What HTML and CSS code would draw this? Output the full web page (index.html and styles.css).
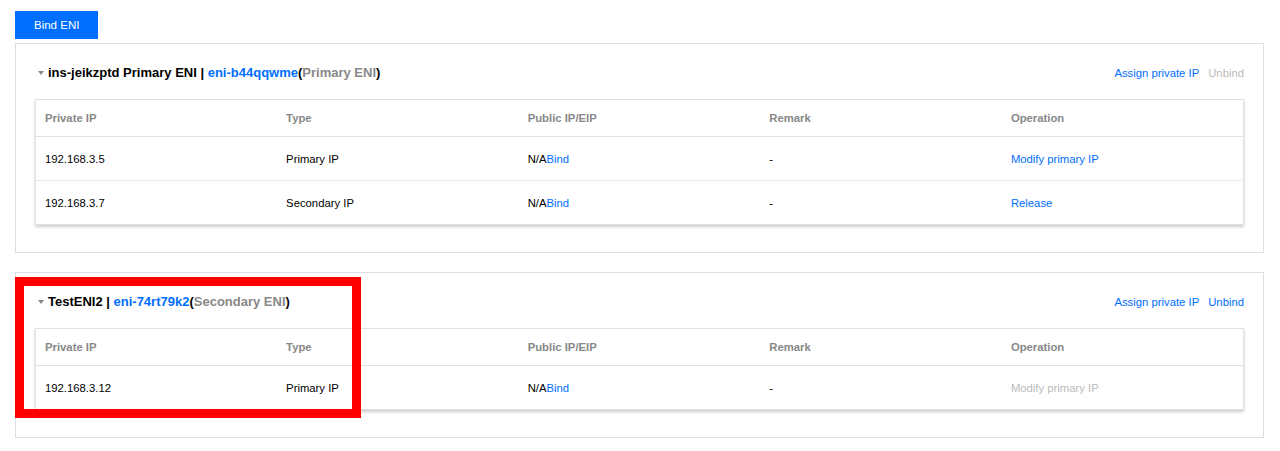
FILE: index.html
```html
<!DOCTYPE html>
<html lang="en">

<head>
    <meta charset="UTF-8">
    <title>ENI</title>
    <link rel="stylesheet" href="styles.css">
</head>

<body>
    <div class="page">
        <button class="btn-primary">Bind ENI</button>

        <div class="eni-panel">
            <div class="eni-head">
                <div class="eni-title"><span class="caret"></span>ins-jeikzptd Primary ENI | <a class="link">eni-b44qqwme</a>(<span class="muted">Primary ENI</span>)</div>
                <div class="eni-actions">
                    <a class="link">Assign private IP</a>
                    <a class="link disabled">Unbind</a>
                </div>
            </div>
            <table class="ip-table">
                <thead>
                    <tr>
                        <th>Private IP</th>
                        <th>Type</th>
                        <th>Public IP/EIP</th>
                        <th>Remark</th>
                        <th>Operation</th>
                    </tr>
                </thead>
                <tbody>
                    <tr>
                        <td>192.168.3.5</td>
                        <td>Primary IP</td>
                        <td>N/A<a class="link">Bind</a></td>
                        <td>-</td>
                        <td><a class="link">Modify primary IP</a></td>
                    </tr>
                    <tr>
                        <td>192.168.3.7</td>
                        <td>Secondary IP</td>
                        <td>N/A<a class="link">Bind</a></td>
                        <td>-</td>
                        <td><a class="link">Release</a></td>
                    </tr>
                </tbody>
            </table>
        </div>

        <div class="eni-panel">
            <div class="eni-head">
                <div class="eni-title"><span class="caret"></span>TestENI2 | <a class="link">eni-74rt79k2</a>(<span class="muted">Secondary ENI</span>)</div>
                <div class="eni-actions">
                    <a class="link">Assign private IP</a>
                    <a class="link">Unbind</a>
                </div>
            </div>
            <table class="ip-table">
                <thead>
                    <tr>
                        <th>Private IP</th>
                        <th>Type</th>
                        <th>Public IP/EIP</th>
                        <th>Remark</th>
                        <th>Operation</th>
                    </tr>
                </thead>
                <tbody>
                    <tr>
                        <td>192.168.3.12</td>
                        <td>Primary IP</td>
                        <td>N/A<a class="link">Bind</a></td>
                        <td>-</td>
                        <td><a class="link disabled">Modify primary IP</a></td>
                    </tr>
                </tbody>
            </table>
            <div class="highlight"></div>
        </div>
    </div>
</body>

</html>
```

FILE: styles.css
```css
body {
    margin: 0;
    font-family: "Liberation Sans", Arial, sans-serif;
    font-size: 11.3px;
    color: #000;
    background-color: #fff;
}

.page {
    padding: 11px 16px 0 15px;
}

.btn-primary {
    display: block;
    height: 28px;
    padding: 0 19px;
    border: none;
    background-color: #006eff;
    color: #fff;
    font-family: inherit;
    font-size: 11.5px;
}

.eni-panel {
    position: relative;
    margin-top: 4px;
    margin-bottom: 19px;
    padding: 20px 19px 27px 19px;
    border: 1px solid #dcdfe6;
}

.eni-head {
    display: flex;
    justify-content: space-between;
    align-items: center;
    height: 18px;
    margin-bottom: 17px;
}

.eni-title {
    font-size: 13px;
    font-weight: bold;
    line-height: 18px;
}

.caret {
    display: inline-block;
    vertical-align: middle;
    width: 0;
    height: 0;
    margin: 0 4px 1px 3px;
    border-left: 3.5px solid transparent;
    border-right: 3.5px solid transparent;
    border-top: 4px solid #888;
}

.eni-actions {
    display: flex;
    gap: 9px;
}

.link {
    color: #006eff;
    cursor: pointer;
}

.link.disabled {
    color: #bbb;
    cursor: default;
}

.muted {
    color: #888;
}

.ip-table {
    width: 100%;
    border-collapse: collapse;
    table-layout: fixed;
    border: 1px solid #dfe1e6;
    box-shadow: 0 2px 3px rgba(0, 0, 0, 0.2);
}

.ip-table th {
    height: 36px;
    padding: 0 9px;
    text-align: left;
    font-weight: bold;
    color: #888;
    border-bottom: 1px solid #dfe1e6;
}

.ip-table td {
    height: 43px;
    padding: 0 9px;
    border-bottom: 1px solid #e6e8ec;
}

.ip-table tr:last-child td {
    border-bottom: none;
}

.highlight {
    position: absolute;
    left: -1px;
    top: 4px;
    width: 328px;
    height: 123px;
    border: 9px solid #ff0000;
}
```
